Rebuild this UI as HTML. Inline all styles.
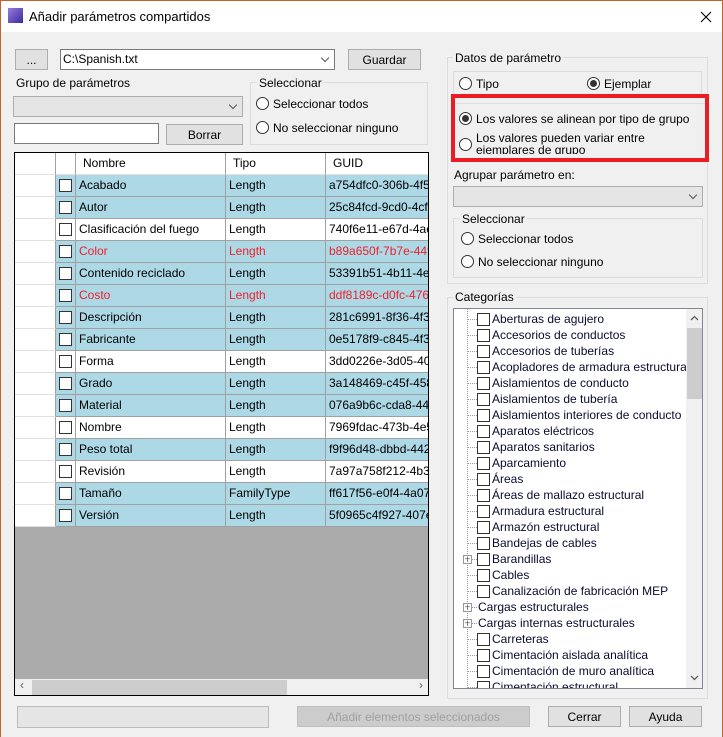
<!DOCTYPE html>
<html><head><meta charset="utf-8"><style>
*{box-sizing:border-box;margin:0;padding:0}
body{width:723px;height:737px;background:#f0f0f0;font-family:"Liberation Sans",sans-serif;font-size:12px;color:#000;position:relative;overflow:hidden}
.a{position:absolute}
.btn{position:absolute;background:#e1e1e1;border:1px solid #adadad;text-align:center;line-height:20px}
.grp{position:absolute;border:1px solid #dcdcdc}
.lbl{position:absolute;background:#f0f0f0;padding:0 2px;white-space:nowrap}
.rad{position:absolute;width:13px;height:13px;border:1px solid #333;border-radius:50%;background:#fff}
.rad.on::after{content:"";position:absolute;left:2px;top:2px;width:7px;height:7px;border-radius:50%;background:#333}
.combo{position:absolute;border:1px solid #adadad;background:#e5e5e5}
.chev{position:absolute;right:6px;top:5px;width:6px;height:6px;border-right:1px solid #555;border-bottom:1px solid #555;transform:rotate(45deg)}
.row{position:absolute;left:1px;height:22px;width:413px}
.row div{position:absolute;top:0;height:22px;line-height:21px;border-right:1px solid #a0a0a0;border-bottom:1px solid #a0a0a0;white-space:nowrap;overflow:hidden;padding-left:3px}
.cb{position:absolute;width:13px;height:13px;border:1px solid #333;background:#fff}
.tree div.it{position:absolute;left:0;height:16px;line-height:16px;white-space:nowrap;color:#0a0a30}
</style></head><body>
<div class="a" style="left:0;top:0;width:723px;height:737px;border:1px solid #c0652a;border-bottom:none;pointer-events:none;z-index:5"></div>
<div class="a" style="left:1px;top:1px;width:721px;height:31px;background:#fff"></div>
<div class="a" style="left:8px;top:8px;width:15px;height:15px;background:linear-gradient(135deg,#9a7adf,#3b2a9c)"></div>
<div class="a" style="left:29px;top:9px;font-size:13px">Añadir parámetros compartidos</div>
<svg class="a" style="left:700px;top:11px" width="12" height="12"><path d="M1 1L11 11M11 1L1 11" stroke="#000" stroke-width="1.1"/></svg>

<div class="btn" style="left:15px;top:49px;width:33px;height:21px;background:#e1e1e1">...</div>
<div class="a" style="left:60px;top:49px;width:275px;height:21px;border:1px solid #7a7a7a;background:#fff;padding-left:2px;line-height:19px">C:\Spanish.txt<div class="chev" style="top:5px"></div></div>
<div class="btn" style="left:348px;top:49px;width:73px;height:21px">Guardar</div>
<div class="a" style="left:16px;top:76px">Grupo de parámetros</div>
<div class="combo" style="left:13px;top:96px;width:230px;height:21px"><div class="chev"></div></div>
<div class="a" style="left:14px;top:123px;width:145px;height:21px;border:1px solid #7a7a7a;background:#fff"></div>
<div class="btn" style="left:166px;top:124px;width:77px;height:21px">Borrar</div>
<div class="grp" style="left:250px;top:82px;width:178px;height:63px"></div>
<div class="lbl" style="left:257px;top:76px">Seleccionar</div>
<div class="rad" style="left:256px;top:97px"></div><div class="a" style="left:273px;top:97px">Seleccionar todos</div>
<div class="rad" style="left:256px;top:121px"></div><div class="a" style="left:273px;top:121px">No seleccionar ninguno</div>

<div class="a" style="left:14px;top:152px;width:415px;height:544px;border:1px solid #000;background:#ababab;overflow:hidden">
<div class="row" style="top:0;left:0;background:#fff">
<div style="left:0;width:41px;border-bottom-color:#e0e0e0"></div><div style="left:41px;width:20px;border-bottom-color:#e0e0e0"></div><div style="left:61px;width:150px;padding-left:7px;border-bottom-color:#e0e0e0">Nombre</div><div style="left:211px;width:100px;padding-left:7px;border-bottom-color:#e0e0e0">Tipo</div><div style="left:311px;width:110px;padding-left:7px;border-bottom-color:#e0e0e0">GUID</div></div>
<div id="rows"></div>
<div class="a" style="left:0;top:526px;width:413px;height:17px;background:#f0f0f0"><div class="a" style="left:17px;top:1px;width:255px;height:15px;background:#cdcdcd"></div><div class="a" style="left:5px;top:-1px;color:#606060">‹</div><div class="a" style="right:5px;top:-1px;color:#606060">›</div></div>
</div>

<div class="a" style="left:17px;top:706px;width:252px;height:22px;border:1px solid #bcbcbc;background:#e5e5e5"></div>
<div class="btn" style="left:297px;top:706px;width:233px;height:21px;background:#cccccc;border-color:#bfbfbf;color:#a0a0a0">Añadir elementos seleccionados</div>
<div class="btn" style="left:548px;top:706px;width:73px;height:21px">Cerrar</div>
<div class="btn" style="left:629px;top:706px;width:73px;height:21px">Ayuda</div>

<div class="grp" style="left:447px;top:57px;width:261px;height:227px"></div>
<div class="lbl" style="left:453px;top:51px">Datos de parámetro</div>
<div class="grp" style="left:453px;top:71px;width:249px;height:26px;border-bottom:none"></div>
<div class="rad" style="left:459px;top:77px"></div><div class="a" style="left:476px;top:77px">Tipo</div>
<div class="rad on" style="left:587px;top:77px"></div><div class="a" style="left:604px;top:77px">Ejemplar</div>
<div class="a" style="left:451px;top:94px;width:258px;height:68px;border:4px solid #ec1c24"></div>
<div class="a" style="left:455px;top:103px;width:250px;height:1px;background:#dcdcdc"></div>
<div class="rad on" style="left:459px;top:112px"></div><div class="a" style="left:476px;top:112px">Los valores se alinean por tipo de grupo</div>
<div class="rad" style="left:459px;top:138px"></div><div class="a" style="left:476px;top:132px;line-height:12px;height:22px;overflow:hidden">Los valores pueden variar entre<br>ejemplares de grupo</div>
<div class="a" style="left:454px;top:168px">Agrupar parámetro en:</div>
<div class="combo" style="left:453px;top:186px;width:250px;height:21px"><div class="chev"></div></div>
<div class="grp" style="left:453px;top:218px;width:250px;height:60px"></div>
<div class="lbl" style="left:460px;top:212px">Seleccionar</div>
<div class="rad" style="left:461px;top:232px"></div><div class="a" style="left:478px;top:232px">Seleccionar todos</div>
<div class="rad" style="left:461px;top:255px"></div><div class="a" style="left:478px;top:255px">No seleccionar ninguno</div>

<div class="grp" style="left:447px;top:297px;width:261px;height:402px"></div>
<div class="lbl" style="left:453px;top:290px">Categorías</div>
<div class="a tree" style="left:453px;top:308px;width:250px;height:381px;border:1px solid #828790;background:#fff;overflow:hidden">
<div id="tree"></div>
<div class="a" style="left:232px;top:0;width:17px;height:379px;background:#f0f0f0;z-index:3"><div class="a" style="left:1px;top:19px;width:15px;height:71px;background:#cdcdcd"></div><svg class="a" style="left:4px;top:6px" width="9" height="6"><path d="M1 5L4.5 1.5L8 5" stroke="#606060" fill="none" stroke-width="1.3"/></svg><svg class="a" style="left:4px;top:366px" width="9" height="6"><path d="M1 1L4.5 4.5L8 1" stroke="#606060" fill="none" stroke-width="1.3"/></svg></div>
</div>

<script>
var d=[["Acabado","Length","a754dfc0-306b-4f5f-b",1],["Autor","Length","25c84fcd-9cd0-4cfa-9",1],["Clasificación del fuego","Length","740f6e11-e67d-4ae7-",0],["Color","Length","b89a650f-7b7e-44ff-9",2],["Contenido reciclado","Length","53391b51-4b11-4e8a",1],["Costo","Length","ddf8189c-d0fc-4764-",2],["Descripción","Length","281c6991-8f36-4f34-",1],["Fabricante","Length","0e5178f9-c845-4f3c-",1],["Forma","Length","3dd0226e-3d05-402a",0],["Grado","Length","3a148469-c45f-458a",1],["Material","Length","076a9b6c-cda8-44ea",1],["Nombre","Length","7969fdac-473b-4e59",0],["Peso total","Length","f9f96d48-dbbd-4424-",1],["Revisión","Length","7a97a758f212-4b3d",0],["Tamaño","FamilyType","ff617f56-e0f4-4a07-a",1],["Versión","Length","5f0965c4f927-407e-",1]];
var h="";d.forEach(function(r,i){var bg=r[3]?"#add8e6":"#fff",c=r[3]==2?"#f0202a":"#000";
h+='<div class="row" style="top:'+(22+i*22)+'px;left:0;color:'+c+'"><div style="left:0;width:41px;background:#fff;border-bottom-color:#e0e0e0;border-right-color:#a0a0a0"></div><div style="left:41px;width:20px;background:'+bg+'"><span class="cb" style="left:3px;top:4px"></span></div><div style="left:61px;width:150px;background:'+bg+'">'+r[0]+'</div><div style="left:211px;width:100px;background:'+bg+'">'+r[1]+'</div><div style="left:311px;width:110px;background:'+bg+'">'+r[2]+'</div></div>';});
document.getElementById("rows").innerHTML=h;
var t=["Aberturas de agujero","Accesorios de conductos","Accesorios de tuberías","Acopladores de armadura estructural","Aislamientos de conducto","Aislamientos de tubería","Aislamientos interiores de conducto","Aparatos eléctricos","Aparatos sanitarios","Aparcamiento","Áreas","Áreas de mallazo estructural","Armadura estructural","Armazón estructural","Bandejas de cables","+Barandillas","Cables","Canalización de fabricación MEP","*Cargas estructurales","*Cargas internas estructurales","Carreteras","Cimentación aislada analítica","Cimentación de muro analítica","Cimentación estructural"];
var g="";t.forEach(function(s,i){var y=2+i*16,p=s[0]=="+",n=s[0]=="*";if(p||n)s=s.slice(1);
g+='<div class="a" style="left:13px;top:'+(y+8)+'px;width:10px;border-top:1px dotted #999"></div>';
if(p||n)g+='<div class="a" style="left:9px;top:'+(y+4)+'px;width:9px;height:9px;border:1px solid #999;background:#fff;font-size:9px;line-height:7px;text-align:center;color:#333">+</div>';
if(n)g+='<div class="it" style="left:24px;top:'+y+'px">'+s+'</div>';
else g+='<span class="cb" style="left:23px;top:'+(y+2)+'px"></span><div class="it" style="left:38px;top:'+y+'px">'+s+'</div>';});
g+='<div class="a" style="left:13px;top:0;height:381px;border-left:1px dotted #999"></div>';
document.getElementById("tree").innerHTML=g;
</script>
</body></html>
